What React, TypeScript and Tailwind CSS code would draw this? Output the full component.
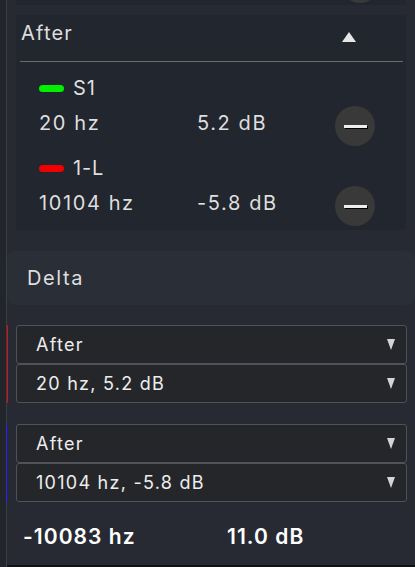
const markers = [
  { name: "S1", color: "bg-[#00f000]", hz: "20 hz", db: "5.2 dB" },
  { name: "1-L", color: "bg-[#f00000]", hz: "10104 hz", db: "-5.8 dB" },
];

const pairs = [
  { accent: "bg-[#e01010]", source: "After", point: "20 hz, 5.2 dB" },
  { accent: "bg-[#1010e0]", source: "After", point: "10104 hz, -5.8 dB" },
];

function RemoveButton() {
  return (
    <button className="flex h-10 w-10 shrink-0 items-center justify-center rounded-full bg-[#393939]">
      <span className="h-[3px] w-[23px] bg-[#ececec] shadow-[1px_1px_0_#000]" />
    </button>
  );
}

function Select({ label }: { label: string }) {
  return (
    <div className="flex h-[39px] items-center justify-between rounded-[3px] border border-[#4f5259] bg-[#25262a] pl-[19px] pr-[11px]">
      <span className="text-[18px] tracking-[0.07em] text-[#ededed]">{label}</span>
      <svg width="8" height="11" viewBox="0 0 8 11">
        <polygon points="0,0 8,0 4,11" fill="#d4d4d4" />
      </svg>
    </div>
  );
}

export default function App() {
  return (
    <div
      className="flex h-[567px] w-[415px] overflow-hidden bg-[#272a33]"
      style={{ fontFamily: "Inter, 'Noto Sans', sans-serif" }}
    >
      <div className="w-[6px] bg-[#22252c]" />
      <div className="w-px bg-[#3b3e46]" />

      <div className="flex flex-1 flex-col">
        {/* tail of the previous panel */}
        <div className="relative mx-[9px] h-[5px] shrink-0 overflow-hidden bg-[#22262e]">
          <div className="absolute left-[324px] top-[-37px] h-10 w-10 rounded-full bg-[#393939]" />
        </div>

        {/* After panel */}
        <section className="mx-[9px] mt-[10px] h-[215px] shrink-0 bg-[#22262e]">
          <div className="flex h-[36px] items-center justify-between pl-[5px] pr-[50px]">
            <span className="text-[20px] tracking-[0.06em] text-[#dedede]">After</span>
            <svg className="mt-[8px]" width="14" height="10" viewBox="0 0 14 10">
              <polygon points="7,0 14,10 0,10" fill="#e6e6e6" />
            </svg>
          </div>
          <div className="ml-1 mr-[3px] mt-[10px] h-px bg-[#6a6a6a]" />
          <div className="flex flex-col pl-[23px] pr-[31px] pt-[11px]">
            {markers.map((m, i) => (
              <div key={m.name} className={i > 0 ? "mt-[7px]" : ""}>
                <div className="flex h-[30px] items-center gap-[9px]">
                  <span className={`h-[7px] w-[25px] rounded-full ${m.color}`} />
                  <span className="text-[20px] tracking-[0.04em] text-[#dedede]">{m.name}</span>
                </div>
                <div className="mt-[3px] flex h-10 items-center">
                  <span className="mb-[6px] w-[158px] text-[20px] tracking-[0.08em] text-[#dedede]">
                    {m.hz}
                  </span>
                  <span className="mb-[6px] flex-1 text-[20px] tracking-[0.08em] text-[#dedede]">
                    {m.db}
                  </span>
                  <RemoveButton />
                </div>
              </div>
            ))}
          </div>
        </section>

        {/* Delta header */}
        <div className="mt-[21px] flex h-[54px] shrink-0 items-center rounded-lg bg-[#2a2e36] pl-5">
          <span className="text-[20px] tracking-[0.08em] text-[#dedede]">Delta</span>
        </div>

        <div className="mt-5 flex shrink-0 flex-col gap-[21px]">
          {pairs.map((p, i) => (
            <div key={i} className="flex">
              <div className={`w-px ${p.accent}`} />
              <div className="mx-2 flex flex-1 flex-col">
                <Select label={p.source} />
                <Select label={p.point} />
              </div>
            </div>
          ))}
        </div>

        <div className="flex h-[63px] shrink-0 items-center pl-4 pt-[7px]">
          <span className="w-[204px] text-[21px] font-semibold tracking-[0.05em] text-white">
            -10083 hz
          </span>
          <span className="text-[21px] font-semibold tracking-[0.05em] text-white">11.0 dB</span>
        </div>
        <div className="flex-1 bg-[#111214]" />
      </div>
    </div>
  );
}
